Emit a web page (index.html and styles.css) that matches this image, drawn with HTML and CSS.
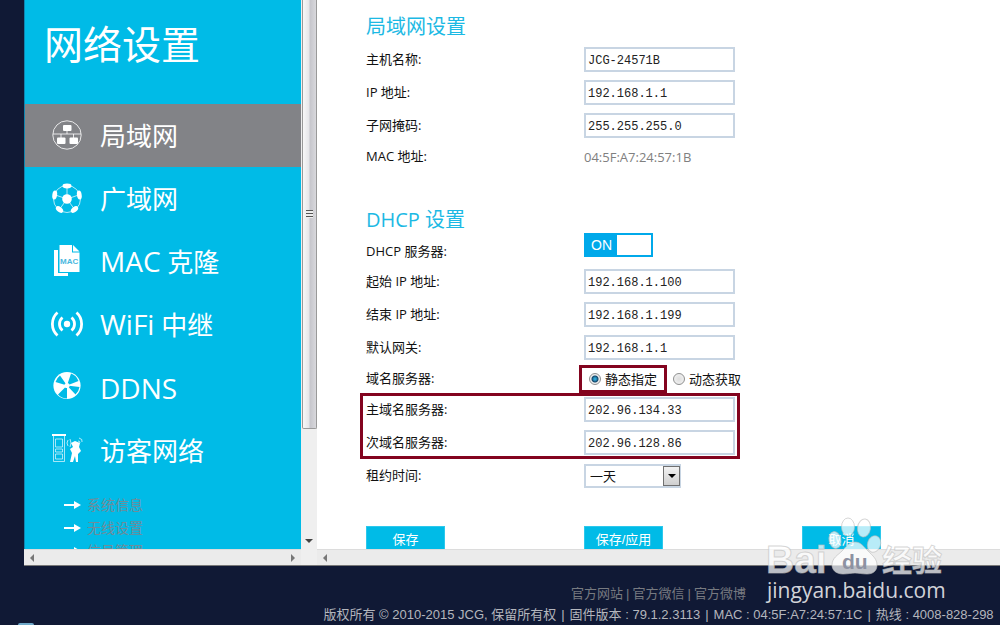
FILE: index.html
```html
<!DOCTYPE html>
<html lang="zh-CN">
<head>
<meta charset="utf-8">
<meta name="viewport" content="width=device-width, initial-scale=1">
<title>网络设置</title>
<link rel="stylesheet" href="styles.css">
</head>
<body>
<div class="frames">
  <aside class="sidebar">
    <h1 class="sidebar-title">网络设置</h1>
    <nav class="menu">
      <a class="menu-item active" href="#lan">
        <svg class="menu-icon" viewBox="0 0 34 34" fill="#fff">
          <circle cx="17" cy="16" r="14.200" fill="none" stroke="#fff" stroke-opacity=".8"/>
          <path d="M3 15h28M17 11v4M11 15v5M23.500 15v5" fill="none" stroke="#fff" stroke-opacity=".8"/>
          <rect x="13" y="6" width="8.500" height="6" rx="1"/>
          <rect x="7" y="18.500" width="8.500" height="6.500" rx="1"/>
          <rect x="19.500" y="18.500" width="8.500" height="6.500" rx="1"/>
        </svg>
        <span>局域网</span>
      </a>
      <a class="menu-item" href="#wan">
        <svg class="menu-icon" viewBox="0 0 34 34" fill="#fff">
          <circle cx="17" cy="17" r="13.500" fill="none" stroke="#fff" stroke-opacity=".7"/>
          <path d="M17 17V4M17 17L4 12.500M17 17l13-4.500M17 17L9 28M17 17l8 11" stroke="#fff" stroke-opacity=".7"/>
          <circle cx="17" cy="17" r="4.800"/>
          <ellipse cx="17" cy="4" rx="4.500" ry="2.400"/>
          <ellipse cx="4.700" cy="13" rx="2.400" ry="4.500" transform="rotate(8 4.700 13)"/>
          <ellipse cx="29.300" cy="13" rx="2.400" ry="4.500" transform="rotate(-8 29.300 13)"/>
          <ellipse cx="9.500" cy="27.500" rx="4.200" ry="2.500" transform="rotate(38 9.500 27.500)"/>
          <ellipse cx="24.500" cy="27.500" rx="4.200" ry="2.500" transform="rotate(-38 24.500 27.500)"/>
        </svg>
        <span>广域网</span>
      </a>
      <a class="menu-item" href="#mac">
        <svg class="menu-icon" viewBox="0 0 34 34" fill="#fff">
          <path d="M4 5h4v23h10v3H4z"/>
          <path d="M9.500 0H22v7.500h7.500V27h-20z"/>
          <path d="M23 0l6.500 6.500H23z"/>
          <text class="icon-mac" x="10" y="19">MAC</text>
        </svg>
        <span><span class="latin">MAC</span> 克隆</span>
      </a>
      <a class="menu-item" href="#wifi">
        <svg class="menu-icon" viewBox="0 0 34 34" fill="none" stroke="#fff" stroke-width="2.800">
          <circle cx="17" cy="16" r="3.200" fill="#fff" stroke="none"/>
          <path d="M12.500 9.500a8.500 8.500 0 0 0 0 13M21.500 9.500a8.500 8.500 0 0 1 0 13M7.500 4.500a15.500 15.500 0 0 0 0 23M26.500 4.500a15.500 15.500 0 0 1 0 23"/>
        </svg>
        <span><span class="latin">WiFi</span> 中继</span>
      </a>
      <a class="menu-item" href="#ddns">
        <svg class="menu-icon" viewBox="0 0 34 34">
          <circle cx="17" cy="14.500" r="13.600" fill="#fff"/>
          <path d="M17 14.500L5.500 11A12.500 12.500 0 0 1 10 4.500zM17 14.500L21 2.500A12.500 12.500 0 0 1 28.500 10zM17 14.500l12.500 1.500a12.500 12.500 0 0 1-4 7.500zM17 14.500v13a12.500 12.500 0 0 1-9-4z" fill="#00bbe7"/>
          <circle cx="17" cy="14.500" r="2.600" fill="#fff"/>
        </svg>
        <span class="latin">DDNS</span>
      </a>
      <a class="menu-item" href="#guest">
        <svg class="menu-icon" viewBox="0 0 34 34" fill="none" stroke="#fff">
          <path d="M2 1h14" stroke-width="2"/>
          <path d="M3.500 2v25.500h11V2M5.500 5h7v8h-7zM5.500 15h7v3h-7zM5.500 20h7v5h-7z" stroke-opacity=".65"/>
          <path d="M18 6q-2 3 0 6M20 5q2 4 0 8M29 4q4 1 3 4M28 7q2 0 2 2" stroke-opacity=".7"/>
          <path d="M21 9l4-2 5 2-1 4 2 4-3 3v8h-2l-1-6-2 6h-3l2-9-2-4 3-2z" fill="#fff" stroke="none"/>
        </svg>
        <span>访客网络</span>
      </a>
    </nav>
    <nav class="submenu">
      <a class="submenu-item" href="#system"><svg class="arrow" viewBox="0 0 17 8"><path d="M0 3h10V0l7 4-7 4V5H0z" fill="#fff"/></svg>系统信息</a>
      <a class="submenu-item" href="#wireless"><svg class="arrow" viewBox="0 0 17 8"><path d="M0 3h10V0l7 4-7 4V5H0z" fill="#fff"/></svg>无线设置</a>
      <a class="submenu-item" href="#signal"><svg class="arrow" viewBox="0 0 17 8"><path d="M0 3h10V0l7 4-7 4V5H0z" fill="#fff"/></svg>信号管理</a>
    </nav>
  </aside>

  <div class="vscroll">
    <div class="vscroll-thumb"><i class="grip"></i></div>
    <svg class="vscroll-arrow" viewBox="0 0 8 4"><path d="M0 0h8L4 4z" fill="#444"/></svg>
  </div>

  <main class="content">
    <form class="settings">
      <h2 class="section-title">局域网设置</h2>
      <div class="row"><label class="label" for="host">主机名称:</label><input class="field" id="host" type="text" value="JCG-24571B"></div>
      <div class="row"><label class="label" for="ip">IP 地址:</label><input class="field" id="ip" type="text" value="192.168.1.1"></div>
      <div class="row"><label class="label" for="mask">子网掩码:</label><input class="field" id="mask" type="text" value="255.255.255.0"></div>
      <div class="row short"><span class="label">MAC 地址:</span><span class="value">04:5F:A7:24:57:1B</span></div>

      <h2 class="section-title dhcp-title">DHCP 设置</h2>
      <div class="row toggle-row"><span class="label" id="dhcp-label">DHCP 服务器:</span><button class="toggle" type="button" aria-pressed="true" aria-labelledby="dhcp-label"><span class="toggle-on">ON</span><span class="toggle-knob"></span></button></div>
      <div class="row"><label class="label" for="start">起始 IP 地址:</label><input class="field" id="start" type="text" value="192.168.1.100"></div>
      <div class="row"><label class="label" for="end">结束 IP 地址:</label><input class="field" id="end" type="text" value="192.168.1.199"></div>
      <div class="row"><label class="label" for="gateway">默认网关:</label><input class="field" id="gateway" type="text" value="192.168.1.1"></div>
      <div class="row short">
        <span class="label">域名服务器:</span>
        <div class="radios">
          <label class="radio marked"><input class="radio-input" type="radio" name="dns" checked>静态指定</label>
          <label class="radio"><input class="radio-input" type="radio" name="dns">动态获取</label>
        </div>
      </div>
      <div class="dns-group">
        <div class="row"><label class="label" for="dns1">主域名服务器:</label><input class="field" id="dns1" type="text" value="202.96.134.33"></div>
        <div class="row"><label class="label" for="dns2">次域名服务器:</label><input class="field" id="dns2" type="text" value="202.96.128.86"></div>
      </div>
      <div class="row"><label class="label" for="lease">租约时间:</label>
        <span class="select-wrap"><select class="select" id="lease"><option>一天</option></select><i class="select-arrow"></i></span>
      </div>
      <div class="actions">
        <button class="btn" type="button">保存</button>
        <button class="btn" type="button">保存/应用</button>
        <button class="btn" type="button">取消</button>
      </div>
    </form>
  </main>

  <div class="hscroll">
    <svg class="hscroll-arrow" viewBox="0 0 4 8"><path d="M4 0v8L0 4z" fill="#777"/></svg>
    <svg class="hscroll-arrow" viewBox="0 0 4 8"><path d="M0 0v8l4-4z" fill="#777"/></svg>
  </div>
  <div class="corner"></div>
  <div class="hscroll">
    <svg class="hscroll-arrow" viewBox="0 0 4 8"><path d="M4 0v8L0 4z" fill="#777"/></svg>
  </div>
</div>

<footer class="footer">
  <p class="footer-line footer-links"><a class="footer-link" href="#site">官方网站</a><span>|</span><a class="footer-link" href="#wechat">官方微信</a><span>|</span><a class="footer-link" href="#weibo">官方微博</a></p>
  <p class="footer-line copyright"><span>版权所有 © 2010-2015 JCG, 保留所有权</span><span>|</span><span>固件版本 : 79.1.2.3113</span><span>|</span><span>MAC : 04:5F:A7:24:57:1C</span><span>|</span><span>热线 : 4008-828-298</span></p>
</footer>

<i class="orb"></i>

<svg class="watermark" viewBox="0 0 190 96">
  <g class="mark">
    <text class="mark-bai" x="5" y="58">Bai</text>
    <ellipse cx="74" cy="25" rx="6" ry="8.500" transform="rotate(-12 74 25)"/>
    <ellipse cx="87" cy="12" rx="6.500" ry="9"/>
    <ellipse cx="103" cy="13" rx="6.500" ry="9" transform="rotate(8 103 13)"/>
    <ellipse cx="113" cy="29" rx="6.500" ry="8.500" transform="rotate(18 113 29)"/>
    <path d="M94 27c6 0 9 5 13 9 5 5 9 8 9 14s-4 9-10 9c-5 0-8-1-12-1s-7 1-12 1c-7 0-11-4-11-9 0-7 6-10 10-14s7-9 13-9z"/>
    <text class="mark-cn" x="121" y="56">经验</text>
  </g>
  <text class="mark-du" x="81" y="54">du</text>
  <text class="mark-url" x="6" y="83">jingyan.baidu.com</text>
</svg>
</body>
</html>
```

FILE: styles.css
```css
* { box-sizing: border-box; }

body {
  margin: 0;
  min-height: 100vh;
  position: relative;
  display: flex;
  flex-direction: column;
  background: #101935;
  font-family: "Open Sans", "Noto Sans CJK SC", sans-serif;
  font-size: 13px;
  color: #111;
}

h1, h2, p { margin: 0; font-weight: 400; }
a { color: inherit; text-decoration: none; }

.frames {
  height: calc(100vh - 59px);
  margin-left: 24px;
  display: grid;
  grid-template-columns: 277px 16px 1fr;
  grid-template-rows: minmax(0, 1fr) 16px;
  border-bottom: 1px solid #777;
}

.sidebar {
  overflow: hidden;
  background: #00bbe7;
  border-left: 1px solid #0f86b0;
  color: #fff;
}
.sidebar-title {
  padding: 15px 19px 31px;
  font-size: 39px;
  line-height: 58px;
}
.menu-item {
  display: flex;
  align-items: center;
  gap: 16px;
  height: 63px;
  padding: 0 25px;
  font-size: 26px;
  line-height: 38px;
}
.menu-item.active { background: #828387; }
.menu-icon { width: 34px; height: 34px; flex: none; }
.icon-mac { font: bold 8px "Liberation Sans", sans-serif; fill: #4ab8de; }
.latin { font-size: 28px; }

.submenu { padding: 11px 39px 0; }
.submenu-item {
  display: flex;
  align-items: center;
  gap: 6px;
  height: 23px;
  font-size: 14px;
  line-height: 23px;
  color: #718b99;
}
.arrow { width: 17px; height: 8px; }

.vscroll {
  display: flex;
  flex-direction: column;
  align-items: center;
  justify-content: space-between;
  padding-bottom: 6px;
  background: #efefef;
}
.vscroll-thumb {
  display: flex;
  align-items: center;
  justify-content: center;
  width: 15px;
  height: 79%;
  border: 1px solid #999;
  border-top: 0;
  border-radius: 0 0 2px 2px;
  background: linear-gradient(90deg, #f8f8f8, #e6e6e9 45%, #c6c6cc 55%, #d8d8dc);
}
.grip {
  width: 7px;
  height: 8px;
  background: repeating-linear-gradient(#555 0 1px, #eee 1px 3px);
}
.vscroll-arrow { width: 8px; height: 4px; }

.hscroll {
  display: flex;
  align-items: center;
  justify-content: space-between;
  padding: 0 6px;
  background: #ebebeb;
  border-top: 1px solid #dcdcdc;
}
.hscroll-arrow { width: 4px; height: 8px; }
.corner { background: #efefef; }

.content { overflow: hidden; background: #fff; }
.settings { padding: 12px 0 0 49px; }
.section-title {
  height: 31px;
  font-size: 20px;
  line-height: 29px;
  color: #1cb9e4;
}
.dhcp-title { margin-top: 34px; height: 28px; }
.row {
  display: grid;
  grid-template-columns: 218px auto;
  justify-content: start;
  align-items: center;
  height: 33px;
}
.row.short { height: 29px; }
.label { line-height: 27px; }
.toggle-row { align-items: end; height: 32px; }
.value { color: #808080; }

.field {
  width: 151px;
  height: 25px;
  padding: 2px 2px 0;
  border: 2px solid #c8d5e3;
  background: #fff;
  font: 12px "Liberation Mono", monospace;
  color: #222;
}

.toggle {
  align-self: start;
  display: flex;
  width: 69px;
  height: 24px;
  padding: 2px;
  border: 0;
  background: #00a9ea;
  color: #fff;
  font: 14px "Liberation Sans", sans-serif;
}
.toggle-on { width: 31px; line-height: 20px; text-align: center; }
.toggle-knob { flex: 1; height: 20px; background: #fff; }

.radios { display: flex; gap: 16px; }
.radio { position: relative; display: flex; align-items: center; gap: 4px; line-height: 20px; }
.radio-input {
  appearance: none;
  width: 12px;
  height: 12px;
  margin: 0 0 0 5px;
  border: 1px solid #8e8f8f;
  border-radius: 50%;
  background: radial-gradient(#ddd, #f6f6f6);
}
.radio + .radio .radio-input { margin-left: 0; }
.radio-input:checked { background: radial-gradient(circle, #2fa5d4 0 1px, #14466a 3px, #eee 4px); }
.radio.marked::after {
  content: "";
  position: absolute;
  inset: -4px -10px -4px -5px;
  border: 3px solid #83041f;
}

.dns-group { position: relative; width: fit-content; }
.dns-group::after {
  content: "";
  position: absolute;
  inset: 0 -5px 0 -6px;
  border: 3px solid #83041f;
  pointer-events: none;
}

.select-wrap { position: relative; display: flex; width: fit-content; }
.select {
  appearance: none;
  width: 97px;
  height: 24px;
  padding: 0 4px;
  border: 2px solid #c8d5e3;
  border-radius: 0;
  background: #fff;
  font: 13px "Noto Sans CJK SC", sans-serif;
  line-height: 20px;
  color: #111;
}
.select-arrow {
  position: absolute;
  top: 2px;
  right: 1px;
  width: 17px;
  height: 20px;
  border: 1px solid #707070;
  background: linear-gradient(#f2f2f2, #cfcfcf);
  pointer-events: none;
}
.select-arrow::after {
  content: "";
  position: absolute;
  top: 7px;
  left: 4px;
  border: 4px solid transparent;
  border-top-color: #000;
  border-bottom: 0;
}

.actions {
  display: grid;
  grid-template-columns: repeat(3, 218px);
  margin-top: 34px;
}
.btn {
  width: 79px;
  height: 24px;
  padding: 0;
  border: 1px solid #2cc8ec;
  background: #00bbe7;
  color: #fff;
  font: 13px "Liberation Sans", "Noto Sans CJK SC", sans-serif;
}

.footer {
  margin-left: 317px;
  padding-top: 17px;
  font-family: "Liberation Sans", "Noto Sans CJK SC", sans-serif;
  font-size: 13px;
  line-height: 21px;
  white-space: nowrap;
  color: #b4b6bd;
}
.footer-line { display: flex; justify-content: center; gap: 5px; }
.footer-links { gap: 3px; color: #777a80; }

.orb {
  position: absolute;
  left: 18px;
  bottom: 0;
  width: 16px;
  height: 2px;
  border-radius: 8px 8px 0 0;
  background: #6fa9c9;
}

.watermark {
  position: absolute;
  right: 49px;
  bottom: 14px;
  width: 190px;
  height: 96px;
  pointer-events: none;
}
.mark { fill: #fff; fill-opacity: .72; stroke: #bbb; stroke-opacity: .6; stroke-width: 1; }
.mark-bai { font: bold 39px "Liberation Sans", sans-serif; }
.mark-cn { font: bold 30px "Noto Sans CJK SC", sans-serif; }
.mark-du { font: bold 21px "Liberation Sans", sans-serif; fill: #8d92a2; }
.mark-url { font: 21px "Open Sans", sans-serif; fill: #fff; fill-opacity: .82; }
```
